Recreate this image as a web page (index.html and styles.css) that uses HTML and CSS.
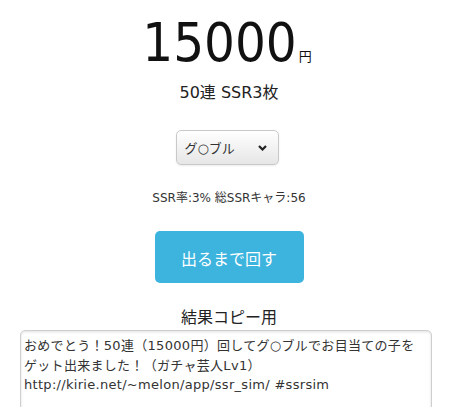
FILE: index.html
```html
<!DOCTYPE html>
<html lang="ja">
<head>
<meta charset="utf-8">
<link rel="stylesheet" href="styles.css">
</head>
<body>
<main class="page">
  <div class="price"><span class="price-num">15000</span><span class="price-unit">円</span></div>
  <div class="summary">50連 SSR3枚</div>
  <div class="select">
    <span class="select-label">グ○ブル</span>
    <svg class="chev" width="9" height="6" viewBox="0 0 9 6"><path d="M1 1 L4.5 4.5 L8 1" fill="none" stroke="#222" stroke-width="2.2"/></svg>
  </div>
  <div class="rate">SSR率:3% 総SSRキャラ:56</div>
  <div class="btn">出るまで回す</div>
  <div class="copy-title">結果コピー用</div>
  <div class="result">おめでとう！50連（15000円）回してグ○ブルでお目当ての子をゲット出来ました！（ガチャ芸人Lv1）<br>http://kirie.net/~melon/app/ssr_sim/ #ssrsim</div>
</main>
</body>
</html>
```
FILE: styles.css
```css
html, body { margin: 0; padding: 0; background: #fff; }
body {
  font-family: "DejaVu Sans", "Noto Sans CJK JP", sans-serif;
  color: #222;
  overflow: hidden;
  height: 407px;
}
.page {
  display: flex;
  flex-direction: column;
  align-items: center;
  padding-top: 16px;
}
.price {
  height: 53px;
  line-height: 53px;
  color: #111;
  margin-right: 4px;
}
.price-num {
  font-family: "DejaVu Sans Condensed", "DejaVu Sans", sans-serif;
  font-size: 54px;
}
.price-unit {
  font-family: "Noto Sans CJK JP", sans-serif;
  font-size: 13px;
  line-height: 1;
  margin-left: 2px;
}
.summary {
  margin-top: 14px;
  font-size: 16px;
  line-height: 20px;
  color: #222;
}
.select {
  margin-top: 27px;
  margin-right: 4px;
  width: 103px;
  height: 35px;
  box-sizing: border-box;
  border: 1px solid #c9c9c9;
  border-radius: 5px;
  background: linear-gradient(#ffffff, #e6e6e6);
  box-shadow: 0 1px 2px rgba(0,0,0,0.08);
  display: flex;
  align-items: center;
  justify-content: space-between;
  padding: 0 11px 0 8px;
  font-size: 13px;
  color: #333;
}
.chev { margin-top: 1px; }
.rate {
  margin-top: 25px;
  font-size: 12px;
  line-height: 16px;
  color: #333;
}
.btn {
  margin-top: 25px;
  width: 149px;
  height: 52px;
  border-radius: 5px;
  background: #3cb4de;
  color: #fff;
  font-size: 16px;
  display: flex;
  align-items: center;
  justify-content: center;
  padding-top: 1px;
  box-sizing: border-box;
}
.copy-title {
  margin-top: 25px;
  font-size: 16px;
  line-height: 20px;
  color: #222;
}
.result {
  align-self: flex-start;
  margin: 2px 0 0 20px;
  width: 412px;
  height: 100px;
  box-sizing: border-box;
  border: 1px solid #cfcfcf;
  border-radius: 5px;
  box-shadow: inset 0 1px 3px rgba(0,0,0,0.12);
  padding: 5px 8px 5px 3px;
  font-size: 13px;
  line-height: 19.5px;
  letter-spacing: 0.3px;
  color: #333;
}
```
